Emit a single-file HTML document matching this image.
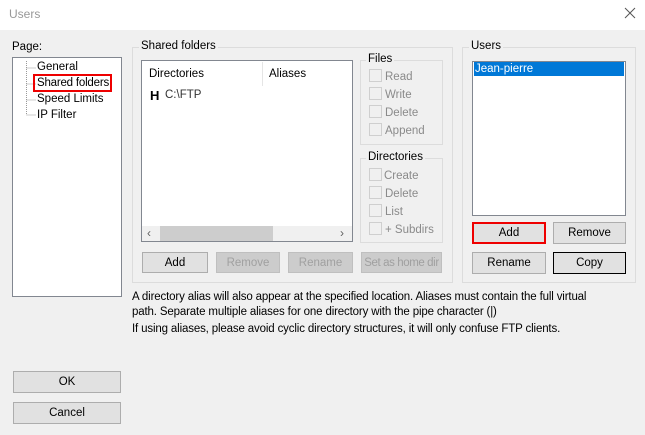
<!DOCTYPE html>
<html><head><style>
*{margin:0;padding:0;box-sizing:border-box}
body{width:645px;height:435px;background:#f0f0f0;font-family:"Liberation Sans",sans-serif;font-size:11.5px;color:#000;position:relative;overflow:hidden}
.a{position:absolute;white-space:nowrap}
.btn{position:absolute;background:#e1e1e1;border:1px solid #adadad;text-align:center;line-height:19px;white-space:nowrap;overflow:hidden}
.dis{color:#a0a0a0;background:#cccccc;border-color:#bfbfbf}
.grp{position:absolute;border:1px solid #dcdcdc}
.gl{position:absolute;background:#f0f0f0;padding:0 2px;top:-8px;left:6px;white-space:nowrap}
.cb{position:absolute;width:13px;height:13px;border:1px solid #cfcfcf;background:#f0f0f0}
.ct{position:absolute;color:#8a8a8a;white-space:nowrap}
</style></head><body>
<div class="a" style="left:0;top:0;width:645px;height:30px;background:#fff"></div>
<div class="a" style="left:9px;top:7px;color:#999;font-size:12px">Users</div>
<svg class="a" style="left:624px;top:7px" width="12" height="12"><path d="M1 1L11 11M11 1L1 11" stroke="#555" stroke-width="1"/></svg>

<div class="a" style="left:12px;top:41px">Page:</div>
<div class="a" style="left:12px;top:57px;width:110px;height:240px;background:#fff;border:1px solid #828790"></div>
<svg class="a" style="left:24px;top:61px" width="12" height="60"><path d="M2.5 0V54M2.5 7H12M2.5 23H12M2.5 39H12M2.5 54H12" stroke="#999" stroke-dasharray="1 1"/></svg>
<div class="a" style="left:37px;top:61px">General</div>
<div class="a" style="left:33px;top:74px;width:79px;height:18px;border:2px solid #e00"></div>
<div class="a" style="left:37px;top:77px;letter-spacing:-0.2px">Shared folders</div>
<div class="a" style="left:37px;top:93px">Speed Limits</div>
<div class="a" style="left:37px;top:109px">IP Filter</div>

<div class="grp" style="left:132px;top:47px;width:321px;height:236px"><div class="gl">Shared folders</div></div>
<div class="a" style="left:141px;top:60px;width:212px;height:182px;background:#fff;border:1px solid #828790"></div>
<div class="a" style="left:149px;top:68px">Directories</div>
<div class="a" style="left:262px;top:62px;width:1px;height:24px;background:#e5e5e5"></div>
<div class="a" style="left:269px;top:68px">Aliases</div>
<div class="a" style="left:150px;top:88px;font-weight:bold;font-size:13px">H</div>
<div class="a" style="left:165px;top:89px;color:#333">C:\FTP</div>
<div class="a" style="left:142px;top:226px;width:210px;height:15px;background:#f0f0f0"></div>
<div class="a" style="left:160px;top:226px;width:113px;height:15px;background:#cdcdcd"></div>
<div class="a" style="left:147px;top:226px;color:#606060;font-size:12px">&lsaquo;</div>
<div class="a" style="left:340px;top:226px;color:#606060;font-size:12px">&rsaquo;</div>
<div class="btn" style="left:142px;top:252px;width:66px;height:21px;line-height:20px">Add</div>
<div class="btn dis" style="left:216px;top:252px;width:64px;height:21px;line-height:20px">Remove</div>
<div class="btn dis" style="left:288px;top:252px;width:65px;height:21px;line-height:20px">Rename</div>
<div class="btn dis" style="left:361px;top:252px;width:81px;height:21px;line-height:20px;letter-spacing:-0.4px">Set as home dir</div>

<div class="grp" style="left:360px;top:60px;width:83px;height:85px"><div class="gl" style="left:5px">Files</div></div>
<div class="cb" style="left:369px;top:69px"></div><div class="ct" style="left:385px;top:71px">Read</div>
<div class="cb" style="left:369px;top:87px"></div><div class="ct" style="left:385px;top:89px">Write</div>
<div class="cb" style="left:369px;top:105px"></div><div class="ct" style="left:385px;top:107px">Delete</div>
<div class="cb" style="left:369px;top:123px"></div><div class="ct" style="left:385px;top:125px">Append</div>
<div class="grp" style="left:360px;top:158px;width:83px;height:85px"><div class="gl" style="left:5px">Directories</div></div>
<div class="cb" style="left:369px;top:168px"></div><div class="ct" style="left:384px;top:170px">Create</div>
<div class="cb" style="left:369px;top:186px"></div><div class="ct" style="left:385px;top:188px">Delete</div>
<div class="cb" style="left:369px;top:204px"></div><div class="ct" style="left:385px;top:206px">List</div>
<div class="cb" style="left:369px;top:222px"></div><div class="ct" style="left:385px;top:224px">+ Subdirs</div>

<div class="grp" style="left:462px;top:47px;width:174px;height:236px"><div class="gl" style="left:6px">Users</div></div>
<div class="a" style="left:472px;top:61px;width:154px;height:155px;background:#fff;border:1px solid #828790"></div>
<div class="a" style="left:474px;top:62px;width:150px;height:14px;background:#0078d7;color:#fff;padding-left:1px;line-height:15px">Jean-pierre</div>
<div class="btn" style="left:472px;top:222px;width:74px;height:22px;border:2px solid #e00;line-height:19px">Add</div>
<div class="btn" style="left:553px;top:222px;width:73px;height:22px;line-height:21px">Remove</div>
<div class="btn" style="left:472px;top:252px;width:74px;height:22px;line-height:21px">Rename</div>
<div class="btn" style="left:553px;top:252px;width:73px;height:22px;border-color:#000;line-height:21px">Copy</div>

<div class="a" style="left:132px;top:291px;letter-spacing:-0.15px">A directory alias will also appear at the specified location. Aliases must contain the full virtual</div>
<div class="a" style="left:132px;top:306px;letter-spacing:-0.15px">path. Separate multiple aliases for one directory with the pipe character (|)</div>
<div class="a" style="left:132px;top:323px;letter-spacing:-0.15px">If using aliases, please avoid cyclic directory structures, it will only confuse FTP clients.</div>

<div class="btn" style="left:13px;top:371px;width:108px;height:22px;line-height:21px">OK</div>
<div class="btn" style="left:13px;top:402px;width:108px;height:22px;line-height:21px">Cancel</div>
</body></html>
